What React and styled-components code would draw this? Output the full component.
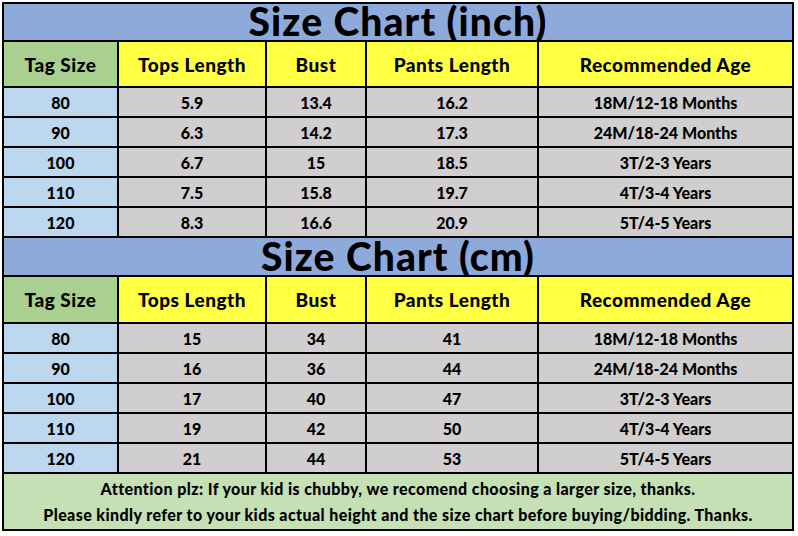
import React from 'react';
import styled, { createGlobalStyle } from 'styled-components';

const Global = createGlobalStyle`
  html, body { margin: 0; padding: 0; background: #fff; }
  body { font-family: Lato, "Noto Sans", sans-serif; color: #000; }
`;

const Page = styled.div`
  padding: 2px 0 0 2px;
  width: 798px;
  height: 536px;
  box-sizing: border-box;
`;

const Chart = styled.div`
  display: grid;
  grid-template-columns: 115px 148px 100px 172px 255px;
  width: 792px;
  box-sizing: border-box;
  border-left: 2px solid #000;
  border-top: 2px solid #000;
`;

const Title = styled.div`
  grid-column: 1 / -1;
  height: ${p => p.$h}px;
  box-sizing: border-box;
  border-right: 2px solid #000;
  border-bottom: 2px solid #000;
  background: #8eaadb;
  display: flex;
  align-items: center;
  justify-content: center;
  font-size: 39px;
  font-weight: 900;
  letter-spacing: 1.1px;
  line-height: 34px;
  padding-bottom: 2px;
`;

const Head = styled.div`
  height: ${p => p.$h}px;
  box-sizing: border-box;
  border-right: 2px solid #000;
  border-bottom: 2px solid #000;
  background: ${p => (p.$tag ? '#a9d08e' : '#ffff44')};
  display: flex;
  align-items: center;
  justify-content: center;
  font-size: 19px;
  letter-spacing: 0.5px;
  font-weight: 900;
`;

const Cell = styled.div`
  height: 30px;
  box-sizing: border-box;
  border-right: 2px solid #000;
  border-bottom: 2px solid #000;
  background: ${p => (p.$tag ? '#bdd7ee' : '#d0cece')};
  display: flex;
  align-items: center;
  justify-content: center;
  font-size: 16px;
  font-weight: 900;
`;

const Footer = styled.div`
  grid-column: 1 / -1;
  height: 57px;
  box-sizing: border-box;
  border-right: 2px solid #000;
  border-bottom: 2px solid #000;
  background: #c5e0b4;
  display: flex;
  flex-direction: column;
  align-items: center;
  justify-content: center;
  gap: 4px;
  font-size: 16px;
  letter-spacing: 0.4px;
  font-weight: 900;
  line-height: 22px;
`;

const headers = ['Tag Size', 'Tops Length', 'Bust', 'Pants Length', 'Recommended Age'];
const ages = ['18M/12-18 Months', '24M/18-24 Months', '3T/2-3 Years', '4T/3-4 Years', '5T/4-5 Years'];
const tags = ['80', '90', '100', '110', '120'];

const inch = [
  ['5.9', '13.4', '16.2'],
  ['6.3', '14.2', '17.3'],
  ['6.7', '15', '18.5'],
  ['7.5', '15.8', '19.7'],
  ['8.3', '16.6', '20.9'],
];
const cm = [
  ['15', '34', '41'],
  ['16', '36', '44'],
  ['17', '40', '47'],
  ['19', '42', '50'],
  ['21', '44', '53'],
];

function Section({ title, data, titleH, headH }) {
  return (
    <>
      <Title $h={titleH}>{title}</Title>
      {headers.map((h, i) => (
        <Head key={h} $tag={i === 0} $h={headH}>{h}</Head>
      ))}
      {data.map((row, r) => (
        <React.Fragment key={r}>
          <Cell $tag>{tags[r]}</Cell>
          {row.map((v, c) => (
            <Cell key={c}>{v}</Cell>
          ))}
          <Cell>{ages[r]}</Cell>
        </React.Fragment>
      ))}
    </>
  );
}

export default function App() {
  return (
    <Page>
      <Global />
      <Chart>
        <Section title="Size Chart (inch)" data={inch} titleH={38} headH={46} />
        <Section title="Size Chart (cm)" data={cm} titleH={39} headH={47} />
        <Footer>
          <div>Attention plz: If your kid is chubby, we recomend choosing a larger size, thanks.</div>
          <div>Please kindly refer to your kids actual height and the size chart before buying/bidding. Thanks.</div>
        </Footer>
      </Chart>
    </Page>
  );
}
